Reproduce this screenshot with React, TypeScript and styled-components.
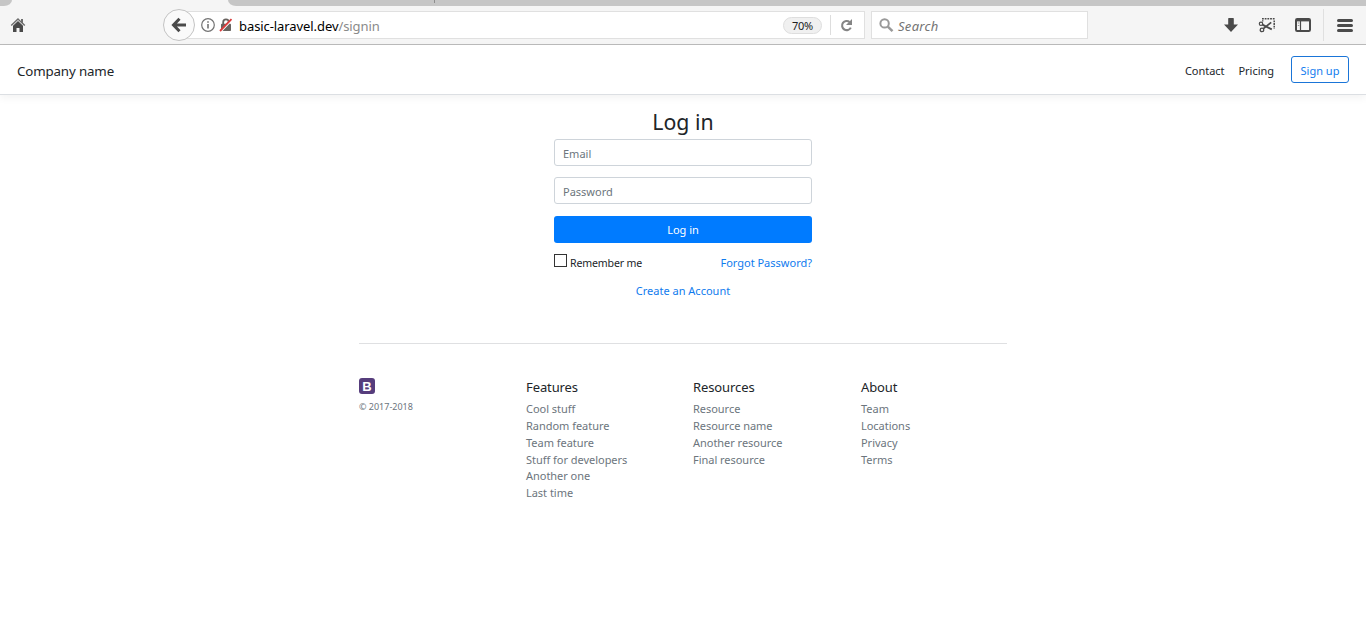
import React from "react";
import styled, { createGlobalStyle } from "styled-components";

const Global = createGlobalStyle`
  *, *::before, *::after { box-sizing: border-box; }
  body {
    margin: 0;
    background: #fff;
    color: #212529;
    font-family: "Noto Sans", "Open Sans", sans-serif;
    font-size: 11px;
    line-height: 17px;
  }
  a { color: inherit; text-decoration: none; }
`;

const Page = styled.div`
  height: 638px;
  overflow: hidden;
  display: flex;
  flex-direction: column;
`;

/* Browser chrome */
const TabStrip = styled.div`
  flex: none;
  display: flex;
  height: 6px;
  background: #f5f5f5;
`;
const TabEdge = styled.div`
  width: 12px;
  background: #c6c6c6;
  border-bottom-right-radius: 8px 6px;
`;
const ActiveTab = styled.div`
  width: 216px;
`;
const IdleTab = styled.div`
  width: 207px;
  background: #c6c6c6;
  border-bottom-left-radius: 8px 6px;
  display: flex;
  justify-content: flex-end;
  &::after { content: ""; width: 1px; height: 3px; background: #8e8e8e; }
`;
const TabRest = styled.div`
  flex: 1;
  background: #c6c6c6;
`;
const Toolbar = styled.div`
  flex: none;
  display: flex;
  align-items: center;
  height: 39px;
  background: #f5f5f5;
  border-bottom: 1px solid #bbb;
`;
const HomeSlot = styled.div`
  width: 163px;
  padding-left: 10px;
  display: flex;
`;
const BackButton = styled.div`
  width: 32px;
  height: 32px;
  border: 1px solid #c3c3c3;
  border-radius: 50%;
  background: #fafafa;
  display: flex;
  align-items: center;
  justify-content: center;
  position: relative;
  z-index: 1;
`;
const AddressBar = styled.div`
  width: 680px;
  height: 28px;
  margin-left: -10px;
  padding-left: 15px;
  background: #fff;
  border: 1px solid #e0e0e0;
  display: flex;
  align-items: center;
  svg { flex: none; }
`;
const Url = styled.div`
  flex: 1;
  margin-left: 6px;
  padding-top: 2px;
  font-size: 13px;
  letter-spacing: -0.08px;
  color: #8a8a8a;
  b { font-weight: 400; color: #000; }
`;
const Zoom = styled.div`
  width: 39px;
  height: 17px;
  border: 1px solid #dedede;
  border-radius: 9px;
  background: #f0f0f0;
  color: #222;
  text-align: center;
  font-size: 11px;
  line-height: 16px;
  letter-spacing: -0.3px;
`;
const Reload = styled.div`
  width: 34px;
  height: 20px;
  margin-left: 8px;
  border-left: 1px solid #ddd;
  display: flex;
  align-items: center;
  padding-left: 9px;
`;
const SearchBox = styled.div`
  width: 217px;
  height: 28px;
  margin-left: 6px;
  padding-left: 7px;
  background: #fff;
  border: 1px solid #e0e0e0;
  display: flex;
  align-items: center;
  gap: 4px;
  font-size: 13px;
  font-style: italic;
  letter-spacing: 0.3px;
  color: #747474;
  span { padding-top: 2px; }
`;
const Tools = styled.div`
  flex: 1;
  height: 100%;
  display: flex;
  align-items: center;
  justify-content: flex-end;
`;
const Tool = styled.div`
  width: 36px;
  display: flex;
  justify-content: center;
`;
const MenuTool = styled.div`
  width: 43px;
  height: 32px;
  margin-left: 2px;
  border-left: 1px solid #e0e0e0;
  display: flex;
  align-items: center;
  padding-left: 13px;
`;

/* Site header */
const Header = styled.header`
  flex: none;
  height: 50px;
  padding: 0 17px;
  border-bottom: 1px solid #dcdfe3;
  box-shadow: 0 3px 8px rgba(0, 0, 0, 0.05);
  display: flex;
  align-items: center;
`;
const Brand = styled.div`
  flex: 1;
  padding-top: 4px;
  font-size: 13.3px;
  letter-spacing: -0.13px;
`;
const NavLink = styled.a`
  margin-right: 14px;
  padding-top: 2px;
  letter-spacing: -0.03px;
`;
const SignUp = styled.a`
  width: 58px;
  height: 27px;
  margin-left: 3px;
  border: 1px solid #1a75d8;
  border-radius: 3px;
  color: #0f7bee;
  text-align: center;
  line-height: 28px;
`;

/* Sign-in form */
const Form = styled.form`
  flex: none;
  width: 258px;
  margin: 14px auto 0;
  display: flex;
  flex-direction: column;
`;
const Title = styled.h1`
  margin: 0;
  height: 30px;
  font-size: 21.3px;
  font-weight: 400;
  line-height: 25px;
  text-align: center;
`;
const Field = styled.input`
  height: 27px;
  margin: 0 0 11px;
  padding: 2px 8px 0;
  border: 1px solid #ced4da;
  border-radius: 3px;
  font: inherit;
  outline: none;
  &::placeholder { color: #6c757d; opacity: 1; }
`;
const Submit = styled.button`
  height: 27px;
  margin: 1px 0 0;
  padding: 0 0 1px;
  border: 0;
  border-radius: 3px;
  background: #007bff;
  color: #fff;
  font: inherit;
`;
const Options = styled.div`
  height: 17px;
  margin-top: 11px;
  display: flex;
  justify-content: space-between;
`;
const Remember = styled.label`
  display: flex;
  gap: 3px;
  font-size: 10.6px;
  line-height: 19px;
  letter-spacing: -0.15px;
`;
const Check = styled.input`
  appearance: none;
  width: 13px;
  height: 13px;
  margin: 0;
  border: 1px solid #333;
  background: #fff;
`;
const BlueLink = styled.a<{ $center?: boolean }>`
  color: #0f7bee;
  margin-top: ${(p) => (p.$center ? "11px" : "0")};
  text-align: ${(p) => (p.$center ? "center" : "left")};
`;

/* Footer */
const Footer = styled.footer`
  flex: none;
  width: 648px;
  margin: 44px auto 0;
  padding-top: 34px;
  border-top: 1px solid #dfe0e2;
  display: grid;
  grid-template-columns: 167px 167px 168px 1fr;
`;
const Copyright = styled.small`
  display: block;
  margin-top: 4px;
  font-size: 9px;
  color: #6c757d;
`;
const Heading = styled.h5`
  margin: 0 0 4px;
  font-size: 13px;
  font-weight: 400;
  line-height: 19px;
  letter-spacing: -0.1px;
`;
const Links = styled.ul`
  margin: 0;
  padding: 0;
  list-style: none;
  color: #6c757d;
  line-height: 16.86px;
  letter-spacing: -0.03px;
`;

const groups = [
  { title: "Features", links: ["Cool stuff", "Random feature", "Team feature", "Stuff for developers", "Another one", "Last time"] },
  { title: "Resources", links: ["Resource", "Resource name", "Another resource", "Final resource"] },
  { title: "About", links: ["Team", "Locations", "Privacy", "Terms"] },
];

const ink = "#4a4a4a";

const HomeIcon = () => (
  <svg width="16" height="16" viewBox="0 0 16 16" fill={ink}>
    <path d="M8 1 .7 8.1l1 1L8 3l6.3 6.1 1-1L13 5.8V2h-2v1.9z" fill="#6e6e6e" />
    <path d="M8 4 3 8.8V15h3.5v-4h3v4H13V8.8z" />
  </svg>
);
const BackIcon = () => (
  <svg width="16" height="16" viewBox="0 0 16 16" fill="none" stroke={ink} strokeWidth="3">
    <path d="M8.5 1.8 2.5 8l6 6.2M3 8h12" />
  </svg>
);
const InfoIcon = () => (
  <svg width="14" height="14" viewBox="0 0 14 14" fill="none" stroke="#737373">
    <circle cx="7" cy="7" r="6.3" strokeWidth="1.2" />
    <path d="M7 6v4.5M7 3.2v1.6" strokeWidth="1.6" />
  </svg>
);
const InsecureSvg = styled.svg`
  margin-left: 4px;
`;
const InsecureIcon = () => (
  <InsecureSvg width="14" height="14" viewBox="0 0 14 14">
    <path d="M4.2 7V4.2a2.8 2.8 0 0 1 5.6 0V7" fill="none" stroke="#68635f" strokeWidth="1.8" />
    <rect x="2" y="5.8" width="10" height="7.2" rx="0.8" fill="#68635f" />
    <path d="M1.6 13.4 12.9 1.7" stroke="#fff" strokeWidth="2.2" />
    <path d="M1 13 12.5 1.2" stroke="#d93a3a" strokeWidth="1.8" />
  </InsecureSvg>
);
const ReloadIcon = () => (
  <svg width="14" height="14" viewBox="0 0 14 14">
    <path d="M9.6 4A4.6 4.6 0 1 0 10.8 9.6" fill="none" stroke="#858585" strokeWidth="2.1" />
    <path d="M12 1v6H6z" fill="#858585" />
  </svg>
);
const SearchIcon = () => (
  <svg width="15" height="15" viewBox="0 0 15 15" fill="none" stroke="#999">
    <circle cx="5.6" cy="5.4" r="4.2" strokeWidth="2" />
    <path d="m8.8 8.6 4.7 4.6" strokeWidth="2.5" />
  </svg>
);
const DownloadIcon = () => (
  <svg width="16" height="16" viewBox="0 0 16 16" fill={ink}>
    <path d="M5.2 1.6q0-.6.6-.6h4.4q.6 0 .6.6v6H15L8 15 1 7.6h4.2z" />
  </svg>
);
const ScissorsIcon = () => (
  <svg width="18" height="16" viewBox="0 0 18 16" fill="none" stroke={ink}>
    <path d="M4 1.7h13" strokeWidth="1.5" strokeDasharray="1.8 .9" />
    <path d="M16.2 3.4V12" strokeWidth="1.5" strokeDasharray="1.8 .9" />
    <path d="M4.7 3.2v1.4" strokeWidth="1.4" />
    <circle cx="3" cy="6.8" r="1.7" strokeWidth="1.2" />
    <circle cx="4" cy="12.9" r="1.8" strokeWidth="1.3" />
    <path d="m4.4 7.6 9.4 4.8M5.4 11.6l7.8-6.2" strokeWidth="1.8" />
  </svg>
);
const SidebarIcon = () => (
  <svg width="16" height="14" viewBox="0 0 16 14" fill="none" stroke={ink}>
    <rect x="1" y="1" width="14" height="12" rx="1.2" strokeWidth="2" />
    <path d="M1 2.4h14" strokeWidth="2" />
    <path d="M5.5 3v10" strokeWidth="1.2" />
    <path d="M2.8 5h1.5M2.8 7.5h1.5" stroke="#999" />
  </svg>
);
const MenuIcon = () => (
  <svg width="16" height="14" viewBox="0 0 16 14" stroke={ink} strokeWidth="3" strokeLinecap="round">
    <path d="M1.5 2.5h13M1.5 7.5h13M1.5 12.5h13" />
  </svg>
);
const Logo = styled.div`
  width: 16px;
  height: 16px;
  border-radius: 3px;
  background: #563d7c;
  color: #fff;
  font: 700 13px/17px "Liberation Sans", sans-serif;
  text-align: center;
`;

export default function App() {
  return (
    <Page>
      <Global />
      <TabStrip>
        <TabEdge />
        <ActiveTab />
        <IdleTab />
        <TabRest />
      </TabStrip>
      <Toolbar>
        <HomeSlot><HomeIcon /></HomeSlot>
        <BackButton><BackIcon /></BackButton>
        <AddressBar>
          <InfoIcon />
          <InsecureIcon />
          <Url><b>basic-laravel.dev</b>/signin</Url>
          <Zoom>70%</Zoom>
          <Reload><ReloadIcon /></Reload>
        </AddressBar>
        <SearchBox><SearchIcon /><span>Search</span></SearchBox>
        <Tools>
          <Tool><DownloadIcon /></Tool>
          <Tool><ScissorsIcon /></Tool>
          <Tool><SidebarIcon /></Tool>
          <MenuTool><MenuIcon /></MenuTool>
        </Tools>
      </Toolbar>
      <Header>
        <Brand>Company name</Brand>
        <NavLink href="#">Contact</NavLink>
        <NavLink href="#">Pricing</NavLink>
        <SignUp href="#">Sign up</SignUp>
      </Header>
      <Form>
        <Title>Log in</Title>
        <Field type="email" placeholder="Email" />
        <Field type="password" placeholder="Password" />
        <Submit type="button">Log in</Submit>
        <Options>
          <Remember><Check type="checkbox" /><span>Remember me</span></Remember>
          <BlueLink href="#">Forgot Password?</BlueLink>
        </Options>
        <BlueLink href="#" $center>Create an Account</BlueLink>
      </Form>
      <Footer>
        <div>
          <Logo>B</Logo>
          <Copyright>© 2017-2018</Copyright>
        </div>
        {groups.map((g) => (
          <div key={g.title}>
            <Heading>{g.title}</Heading>
            <Links>
              {g.links.map((l) => <li key={l}><a href="#">{l}</a></li>)}
            </Links>
          </div>
        ))}
      </Footer>
    </Page>
  );
}
